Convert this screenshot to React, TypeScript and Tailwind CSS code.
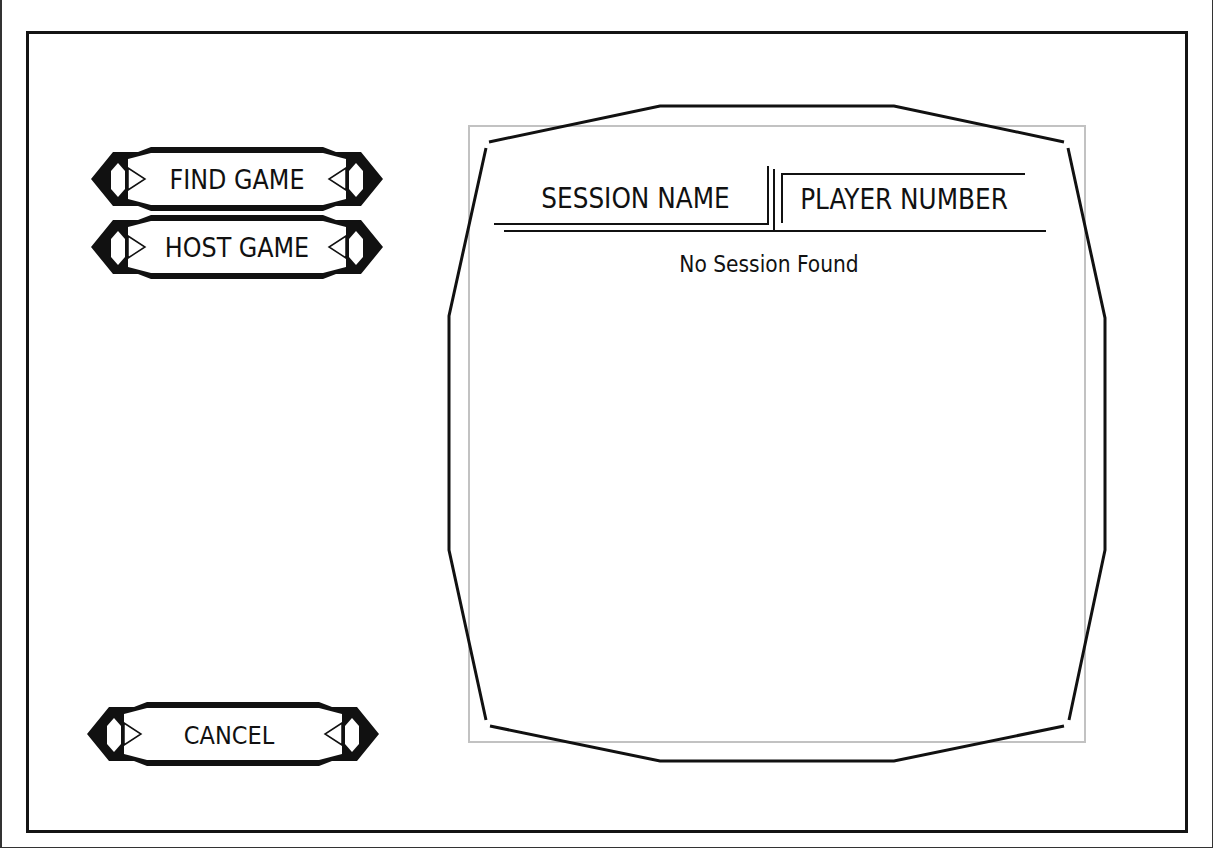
import type { ReactNode } from 'react';

// Ornamental lobby button: black hex cap on each end, white body
function OrnateButton({ label, className = '', textClass = '' }: { label: string; className?: string; textClass?: string }) {
  return (
    <div className={`relative w-[292px] h-[64px] flex items-center justify-center ${className}`}>
      <svg className="absolute inset-0" width="292" height="64" viewBox="0 0 292 64">
        <polygon
          points="0,32 22,5 47,5 60,0 232,0 245,5 270,5 292,32 270,59 245,59 232,64 60,64 47,59 22,59"
          fill="#111"
        />
        <polygon points="37,12 60,6 232,6 255,12 255,52 232,58 60,58 37,52" fill="#fff" />
        {/* eyes */}
        <polygon points="27,16 34,24 34,42 27,50 20,42 20,24" fill="#fff" />
        <polygon points="265,16 272,24 272,42 265,50 258,42 258,24" fill="#fff" />
        {/* arrows */}
        <polygon points="37,21 54,32 37,43" fill="#fff" stroke="#111" strokeWidth="1.5" />
        <polygon points="255,21 238,32 255,43" fill="#fff" stroke="#111" strokeWidth="1.5" />
      </svg>
      <span className={`relative leading-none text-[#111] pt-[3px] ${textClass}`}>{label}</span>
    </div>
  );
}

function SessionPanel({ children }: { children: ReactNode }) {
  return (
    <div className="relative w-[658px] h-[658px] mt-[71px] pl-[19px] pt-[20px]">
      <div className="w-[618px] h-[618px] border-2 border-[#c2c2c2]">{children}</div>
      {/* octagon frame drawn over the list box */}
      <svg
        className="absolute inset-0 overflow-visible pointer-events-none"
        width="658"
        height="658"
        viewBox="0 0 658 658"
        fill="none"
        stroke="#111"
        strokeWidth="3"
      >
        <polyline points="37,43 0,211 0,445 37,615" />
        <polyline points="41,621 211,656 445,656 615,621" />
        <polyline points="620,615 656,445 656,213 619,43" />
        <polyline points="615,37 445,1 211,1 40,37" />
      </svg>
    </div>
  );
}

function App() {
  return (
    <div
      className="w-[1213px] h-[848px] bg-white border-l-2 border-r border-b border-[#333] overflow-hidden"
      style={{ fontFamily: '"DejaVu Sans Condensed", "Open Sans", sans-serif' }}
    >
      <div className="ml-[24px] mt-[31px] w-[1162px] h-[802px] border-[3px] border-[#141414] flex">
        {/* Left menu */}
        <div className="w-[420px] flex flex-col pl-[62px] pt-[113px] pb-[64px]">
          <OrnateButton label="FIND GAME" textClass="text-[26.5px]" />
          <OrnateButton label="HOST GAME" className="mt-[4px]" textClass="text-[26.5px]" />
          <div className="mt-auto -ml-[4px]">
            <OrnateButton label="CANCEL" className="h-[63px]" textClass="text-[25px] pr-[8px]" />
          </div>
        </div>

        {/* Session list */}
        <SessionPanel>
          <div className="ml-[24px] mt-[39px] w-[552px]">
            <div className="flex items-start">
              <div className="w-[275px] h-[59px] border-r-2 border-b-2 border-[#111] flex items-center justify-center pl-[10px] pt-[8px] text-[27.5px] leading-none text-[#111]">
                SESSION NAME
              </div>
              <div className="ml-[4px] mt-[3px] w-[2px] h-[63px] bg-[#111]" />
              <div className="ml-[6px] mt-[7px] w-[244px] h-[50px] border-l-2 border-t-2 border-[#111] flex items-center justify-center pt-[1px] text-[27.5px] leading-none text-[#111]">
                PLAYER NUMBER
              </div>
            </div>
            <div className="-mt-[2px] ml-[10px] w-[542px] h-[2px] bg-[#111]" />
            <div className="mt-[17px] pr-[2px] text-center text-[22.5px] leading-[30px] text-[#111]">No Session Found</div>
          </div>
        </SessionPanel>
      </div>
    </div>
  );
}

export default App;
